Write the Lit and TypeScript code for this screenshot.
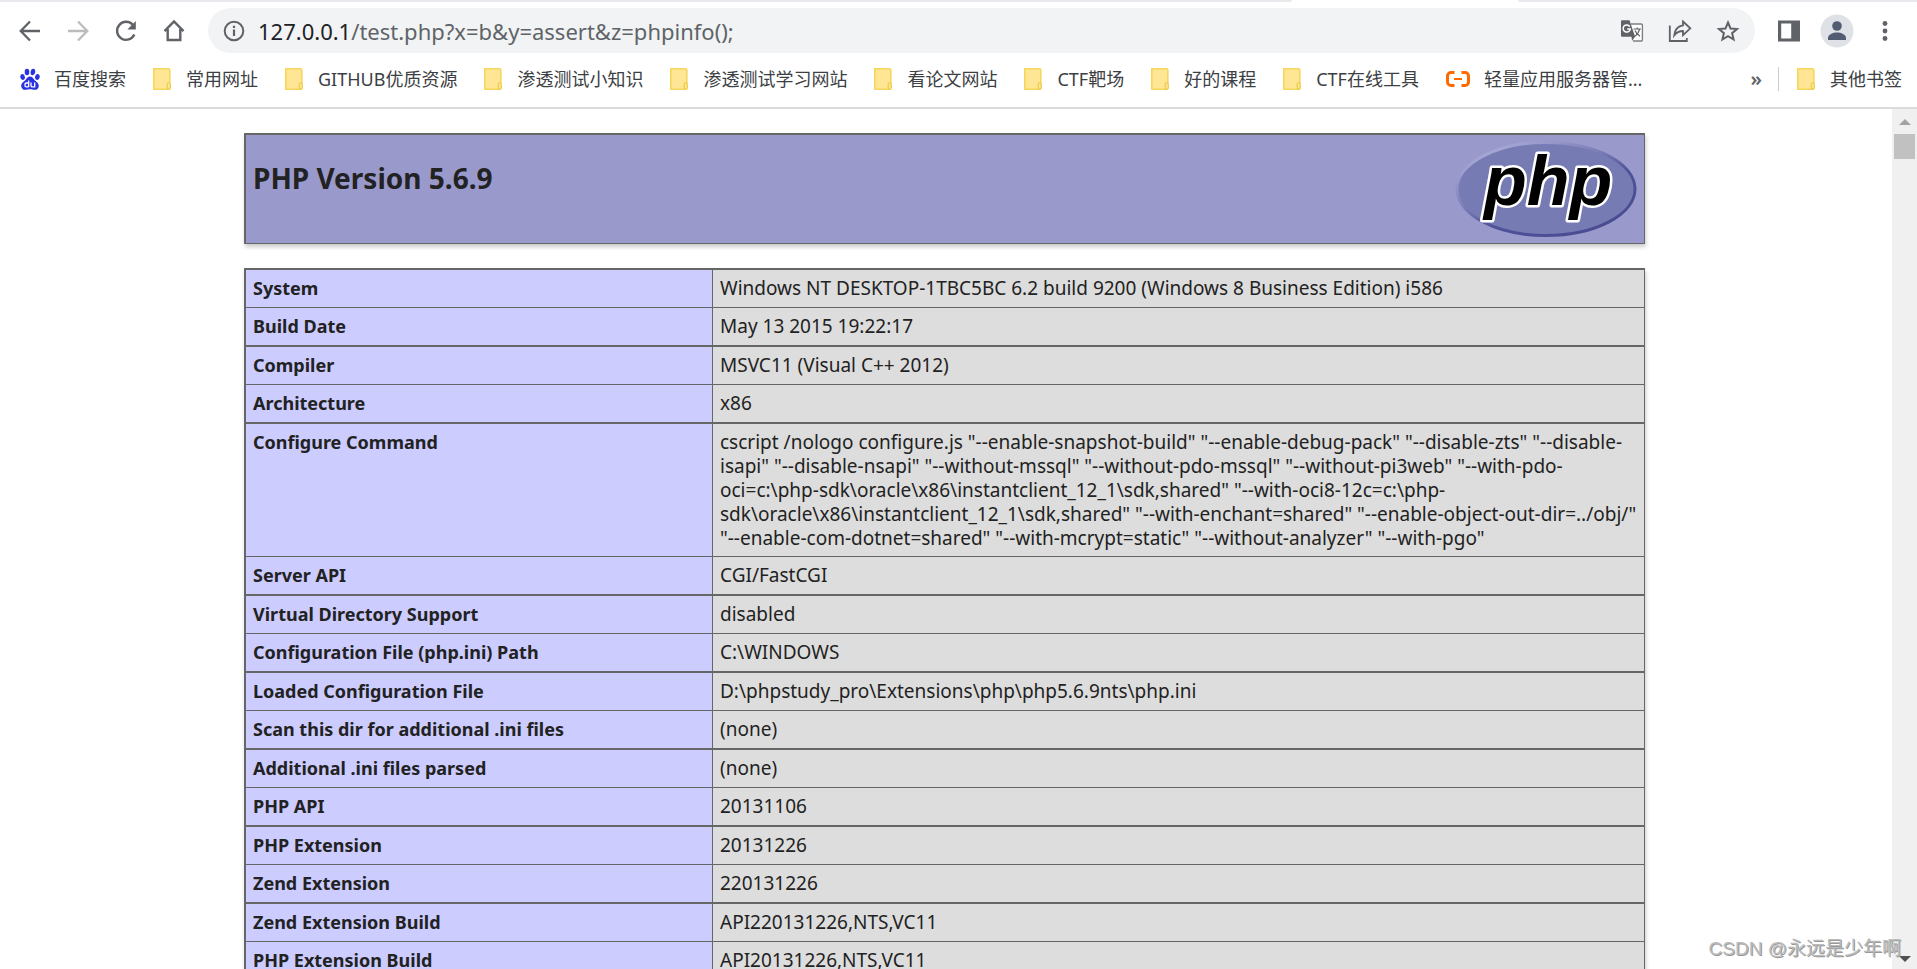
import { LitElement, html, svg, css, nothing } from "lit";
import { customElement } from "lit/decorators.js";

const FOLDER = html`<svg width="18" height="22" viewBox="0 0 18 22" aria-hidden="true">
  <path d="M.8.8H15.5a1.3 1.3 0 0 1 1.3 1.3V20.2a1 1 0 0 1-1 1H.8z" fill="#ffe694" stroke="#f6d65c" stroke-width="1.6"/>
  <path d="M14.2 21V16a1.2 1.2 0 0 1 1.2-1.2h.6a1.2 1.2 0 0 1 1.2 1.2v4a1.2 1.2 0 0 1-1.2 1.2z" fill="#ffe694" stroke="#e9c63c"/>
</svg>`;

const BAIDU = html`<svg width="20" height="22" viewBox="0 0 20 22" aria-hidden="true">
  <g fill="#2932e1">
    <ellipse cx="2.6" cy="9" rx="2.3" ry="3.1" transform="rotate(-8 2.6 9)"/>
    <ellipse cx="7" cy="4" rx="2.3" ry="3.3"/>
    <ellipse cx="12.9" cy="4" rx="2.3" ry="3.3" transform="rotate(8 12.9 4)"/>
    <ellipse cx="17.4" cy="9" rx="2.3" ry="3.1" transform="rotate(8 17.4 9)"/>
    <path d="M10 8.4c2.2 0 3.1 1.7 4.3 3.3 1.5 1.9 4.5 3 4.5 6.2 0 2.4-1.7 3.9-3.9 3.9-1.900 0-3-.5-4.900-.5s-3 .5-4.900.5c-2.200 0-3.900-1.500-3.900-3.900 0-3.200 3-4.300 4.500-6.200C6.900 10.100 7.800 8.400 10 8.400z"/>
  </g>
  <g fill="none" stroke="#fff" stroke-width="1.300">
    <path d="M8.700 12.500V19M8.700 15H6.300a1.300 1.300 0 0 0-1.300 1.300v1.200a1.300 1.300 0 0 0 1.300 1.300h2.400"/>
    <path d="M11 14.500v3a1.400 1.400 0 0 0 1.400 1.400h2.300V14.500"/>
  </g>
</svg>`;

const ALIYUN = html`<svg width="24" height="16" viewBox="0 0 24 16" aria-hidden="true">
  <path d="M8.500 1.500H5A3.500 3.500 0 0 0 1.500 5v6A3.500 3.500 0 0 0 5 14.500h3.500M15.500 1.500H19A3.500 3.500 0 0 1 22.500 5v6a3.500 3.500 0 0 1-3.500 3.500h-3.500" fill="none" stroke="#ff6a00" stroke-width="3"/>
  <path d="M8 8h8" stroke="#ff6a00" stroke-width="2"/>
</svg>`;

const icon = (body: unknown) =>
  html`<svg width="24" height="24" viewBox="0 0 24 24" aria-hidden="true">${body}</svg>`;

const ICONS = {
  back: icon(svg`<path d="M22 12H3.500M12 2.500 2.700 12l9.300 9.500" fill="none" stroke="#5f6368" stroke-width="2.300"/>`),
  forward: icon(svg`<path d="M2 12h18.500M12 2.500 21.300 12 12 21.500" fill="none" stroke="#babcbe" stroke-width="2.300"/>`),
  reload: icon(svg`<path d="M20.300 15.500A9 9 0 1 1 18.600 5.600" fill="none" stroke="#5f6368" stroke-width="2.400"/><path d="M21.800 2v8.500h-8.500z" fill="#5f6368"/>`),
  home: icon(svg`<path d="M2.500 12.200 12 2.500l9.500 9.700M5.700 10v11h12.600V10" fill="none" stroke="#5f6368" stroke-width="2.400"/>`),
  info: icon(svg`<circle cx="12" cy="12" r="9.300" fill="none" stroke="#5f6368" stroke-width="2"/><path d="M12 10.500V17M12 6.700v2.300" stroke="#5f6368" stroke-width="2.200"/>`),
  translate: icon(svg`<path d="M11 5h10.200a1.200 1.200 0 0 1 1.200 1.200v14.600a1.200 1.200 0 0 1-1.200 1.200H13" fill="#fff" stroke="#7d8084" stroke-width="1.400"/>
    <path d="M2.300 1.200h7.200l5.600 16.600H2.300A1.300 1.300 0 0 1 1 16.500v-14a1.300 1.300 0 0 1 1.300-1.300zM11.500 17.800h3.600l-3 4z" fill="#5f6368"/>
    <path d="M9.800 7.600A3.600 3.600 0 1 0 10.300 10H7.200" fill="none" stroke="#fff" stroke-width="1.500"/>
    <path d="M13.500 10h7.500M17.200 8.500V10M19.500 10c-.5 3-2.200 5.500-4.500 7.200M15 11.500c1 2.400 2.800 4.400 5 5.800" fill="none" stroke="#5f6368" stroke-width="1.200"/>`),
  share: icon(svg`<path d="M1.800 6.500V22h17v-3" fill="none" stroke="#5f6368" stroke-width="1.800"/>
    <path d="M15 2.500 22.300 9.300 15 16.200v-4.200c-4 0-6.500 1.300-8.700 4.200.6-5 3-9 8.700-9.800z" fill="none" stroke="#5f6368" stroke-width="1.800"/>`),
  star: icon(svg`<path d="m12 3.500 2.500 6 6.500.5-4.900 4.200 1.500 6.300-5.600-3.400-5.600 3.400 1.500-6.300L3 10l6.500-.5z" fill="none" stroke="#5f6368" stroke-width="2"/>`),
  panel: icon(svg`<path d="M1 1.500h22v21H1zM4.200 4.500v15h10v-15z" fill="#5f6368" fill-rule="evenodd"/>`),
  menu: icon(svg`<g fill="#5f6368"><circle cx="12" cy="4.500" r="2.400"/><circle cx="12" cy="12" r="2.400"/><circle cx="12" cy="19.500" r="2.400"/></g>`),
};

const AVATAR = html`<svg width="34" height="34" viewBox="0 0 34 34" aria-hidden="true">
  <circle cx="17" cy="17" r="16.500" fill="#dee1e6"/>
  <circle cx="17" cy="12" r="4.800" fill="#525d72"/>
  <path d="M8 26v-2c0-3.600 5-5.500 9-5.500s9 1.900 9 5.500v2z" fill="#525d72"/>
</svg>`;

const BOOKMARKS: [string, unknown][] = [
  ["百度搜索", BAIDU],
  ["常用网址", FOLDER],
  ["GITHUB优质资源", FOLDER],
  ["渗透测试小知识", FOLDER],
  ["渗透测试学习网站", FOLDER],
  ["看论文网站", FOLDER],
  ["CTF靶场", FOLDER],
  ["好的课程", FOLDER],
  ["CTF在线工具", FOLDER],
  ["轻量应用服务器管...", ALIYUN],
];

const CONFIGURE = [
  `cscript /nologo configure.js "--enable-snapshot-build" "--enable-debug-pack" "--disable-zts" "--disable-`,
  `isapi" "--disable-nsapi" "--without-mssql" "--without-pdo-mssql" "--without-pi3web" "--with-pdo-`,
  `oci=c:\\php-sdk\\oracle\\x86\\instantclient_12_1\\sdk,shared" "--with-oci8-12c=c:\\php-`,
  `sdk\\oracle\\x86\\instantclient_12_1\\sdk,shared" "--with-enchant=shared" "--enable-object-out-dir=../obj/"`,
  `"--enable-com-dotnet=shared" "--with-mcrypt=static" "--without-analyzer" "--with-pgo"`,
];

const ROWS: [string, string[]][] = [
  ["System", ["Windows NT DESKTOP-1TBC5BC 6.2 build 9200 (Windows 8 Business Edition) i586"]],
  ["Build Date", ["May 13 2015 19:22:17"]],
  ["Compiler", ["MSVC11 (Visual C++ 2012)"]],
  ["Architecture", ["x86"]],
  ["Configure Command", CONFIGURE],
  ["Server API", ["CGI/FastCGI"]],
  ["Virtual Directory Support", ["disabled"]],
  ["Configuration File (php.ini) Path", ["C:\\WINDOWS"]],
  ["Loaded Configuration File", ["D:\\phpstudy_pro\\Extensions\\php\\php5.6.9nts\\php.ini"]],
  ["Scan this dir for additional .ini files", ["(none)"]],
  ["Additional .ini files parsed", ["(none)"]],
  ["PHP API", ["20131106"]],
  ["PHP Extension", ["20131226"]],
  ["Zend Extension", ["220131226"]],
  ["Zend Extension Build", ["API220131226,NTS,VC11"]],
  ["PHP Extension Build", ["API20131226,NTS,VC11"]],
];

@customElement("browser-chrome")
class BrowserChrome extends LitElement {
  static styles = css`
    :host { display: block; background: #fff; border-bottom: 2px solid #dadbdb; }
    .tabs { display: flex; height: 2px; }
    .tab-rest { background: #e8e8ed; flex: 1292; border-bottom-right-radius: 2px; }
    .tab-active { flex: 226; }
    .tab-after { background: #e8e8ed; flex: 399; border-bottom-left-radius: 2px; }
    .toolbar { display: flex; align-items: center; padding: 6px 20px 0 18px; }
    button { border: 0; padding: 0; background: none; display: flex; cursor: pointer; }
    .nav { display: flex; gap: 24px; margin-right: 22px; }
    .address { flex: 1; display: flex; align-items: center; height: 45px; border-radius: 23px; background: #f1f3f4; padding: 0 15px 0 14px; }
    .url { position: relative; flex: 1; margin: 0 12px; display: flex; }
    .url-text { font-size: 22px; line-height: 28px; color: #5f6368; white-space: pre; }
    .host { color: #202124; }
    .url-input { position: absolute; inset: 0; width: 100%; border: 0; padding: 0; background: none; color: transparent; font: inherit; font-size: 22px; outline: none; opacity: 0; }
    .actions { display: flex; gap: 24px; }
    .side { display: flex; align-items: center; gap: 19px; margin-left: 22px; }
    .bookmarks { display: flex; align-items: center; box-sizing: border-box; height: 54px; padding: 0 15px 2px 20px; }
    a { display: flex; align-items: center; gap: 15px; color: #3c4043; text-decoration: none; font-size: 18px; line-height: 24px; white-space: nowrap; }
    .list { display: flex; gap: 27px; flex: 1; }
    .icon-wide { gap: 14px; }
    .more { font-size: 20px; line-height: 24px; color: #5f6368; margin-right: 16px; font-family: inherit; font-weight: 600; }
    .rule { width: 1px; height: 24px; background: #c9ccd0; margin-right: 18px; }
  `;

  render() {
    return html`
      <div class="tabs"><i class="tab-rest"></i><i class="tab-active"></i><i class="tab-after"></i></div>
      <div class="toolbar">
        <nav class="nav">
          <button aria-label="Back">${ICONS.back}</button>
          <button aria-label="Forward">${ICONS.forward}</button>
          <button aria-label="Reload">${ICONS.reload}</button>
          <button aria-label="Home">${ICONS.home}</button>
        </nav>
        <div class="address">
          <button aria-label="Site information">${ICONS.info}</button>
          <div class="url">
            <span class="url-text"><span class="host">127.0.0.1</span>/test.php?x=b&amp;y=assert&amp;z=phpinfo();</span>
            <input class="url-input" aria-label="Address" />
          </div>
          <div class="actions">
            <button aria-label="Translate">${ICONS.translate}</button>
            <button aria-label="Share">${ICONS.share}</button>
            <button aria-label="Bookmark">${ICONS.star}</button>
          </div>
        </div>
        <div class="side">
          <button aria-label="Side panel">${ICONS.panel}</button>
          <button aria-label="Profile">${AVATAR}</button>
          <button aria-label="Menu">${ICONS.menu}</button>
        </div>
      </div>
      <div class="bookmarks">
        <div class="list">
          ${BOOKMARKS.map(([name, glyph]) => html`<a href="#" class=${glyph === FOLDER ? nothing : "icon-wide"}>${glyph}<span>${name}</span></a>`)}
        </div>
        <button class="more" aria-label="More bookmarks">»</button>
        <span class="rule"></span>
        <a href="#">${FOLDER}<span>其他书签</span></a>
      </div>
    `;
  }
}

@customElement("php-info")
class PhpInfo extends LitElement {
  static styles = css`
    :host { display: block; max-width: 1401px; margin: 0 auto; color: #222; }
    .banner { display: flex; justify-content: space-between; align-items: flex-start; box-sizing: border-box; height: 111px; padding: 6px 7px 0; margin-bottom: 24px; background: #9999cc; border: solid #666; border-width: 2px 1px 1px 2px; box-shadow: 1px 3px 4px #ccc; }
    h1 { margin: 18px 0 0; font-size: 28px; line-height: 38px; font-weight: 700; }
    table { width: 100%; border-spacing: 0; table-layout: fixed; border: solid #666; border-width: 0 1px 1px 2px; box-shadow: 1px 3px 4px #ccc; }
    th, td { box-sizing: border-box; height: 38px; padding: 6px 7px; vertical-align: top; text-align: left; line-height: 24px; border-top: 1px solid #666; }
    tr:nth-child(odd) > * { height: 39px; border-top-width: 2px; }
    th { width: calc(100% / 3); background: #ccccff; font-weight: 700; font-size: 18px; }
    td { background: #ddd; border-left: 1px solid #666; font-size: 19px; overflow-wrap: break-word; }
  `;

  render() {
    return html`
      <header class="banner">
        <h1>PHP Version 5.6.9</h1>
        <svg width="182" height="97" viewBox="0 0 182 97" role="img" aria-label="PHP logo">
          <defs>
            <linearGradient id="rim" x1=".1" y1="0" x2=".9" y2="1">
              <stop offset="0" stop-color="#b4b4e0"/><stop offset=".4" stop-color="#7b7db6"/>
              <stop offset=".6" stop-color="#50529a"/><stop offset="1" stop-color="#484a8f"/>
            </linearGradient>
          </defs>
          <ellipse cx="91" cy="48" rx="89" ry="46.500" fill="#777bb3" stroke="url(#rim)" stroke-width="3"/>
          <text x="29" y="64" font-family="Liberation Sans, Arial, sans-serif" font-size="70" font-weight="700" font-style="italic" fill="#000" stroke="#fff" stroke-width="5" stroke-linejoin="round" paint-order="stroke">php</text>
        </svg>
      </header>
      <table>
        <tbody>
          ${ROWS.map(([name, lines]) => html`<tr>
            <th scope="row">${name}</th>
            <td>${lines.map((line, i) => html`${i ? html`<br>` : nothing}${line}`)}</td>
          </tr>`)}
        </tbody>
      </table>
    `;
  }
}

@customElement("app-root")
class AppRoot extends LitElement {
  static styles = css`
    :host { display: flex; flex-direction: column; height: 100vh; overflow: hidden; background: #fff; font-family: "Noto Sans", "Noto Sans CJK SC", sans-serif; }
    .viewport { flex: 1; min-height: 0; display: flex; }
    .page { flex: 1; min-width: 0; overflow: hidden; padding: 24px 3px 0 0; }
    .scrollbar { width: 25px; box-sizing: border-box; background: #f0f0f0; padding: 10px 2px 7px; display: flex; flex-direction: column; align-items: center; }
    .thumb { width: 21px; height: 25px; margin-top: 9px; background: #c1c1c1; }
    .space { flex: 1; }
    .watermark { position: absolute; right: 16px; bottom: 6px; font-size: 19px; line-height: 28px; color: #bbb; text-shadow: 1px 1px 0 #999; font-family: "Liberation Sans", "Noto Sans CJK SC", sans-serif; }
  `;

  render() {
    return html`
      <browser-chrome></browser-chrome>
      <div class="viewport">
        <main class="page"><php-info></php-info></main>
        <div class="scrollbar">
          <svg width="12" height="6" viewBox="0 0 12 6" aria-hidden="true"><path d="M0 6 6 0l6 6z" fill="#a3a3a3"/></svg>
          <div class="thumb"></div>
          <div class="space"></div>
          <svg width="12" height="6" viewBox="0 0 12 6" aria-hidden="true"><path d="M0 0h12L6 6z" fill="#505050"/></svg>
        </div>
      </div>
      <div class="watermark">CSDN @永远是少年啊</div>
    `;
  }
}
